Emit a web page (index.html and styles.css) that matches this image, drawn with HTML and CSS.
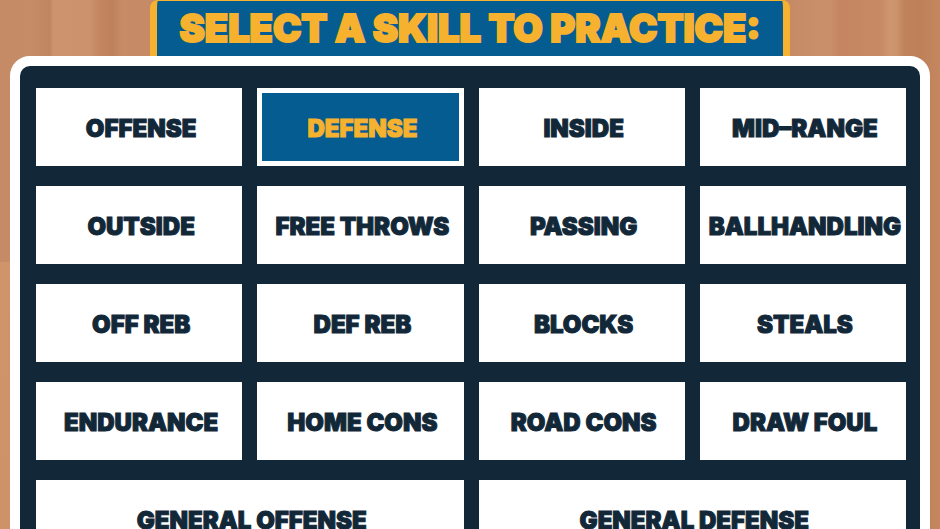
FILE: index.html
```html
<!DOCTYPE html>
<html lang="en">
<head>
  <meta charset="UTF-8" />
  <meta name="viewport" content="width=device-width, initial-scale=1.0" />
  <title>Practice</title>
  <link rel="stylesheet" href="styles.css">
</head>
<body>
  <h1 class="banner">SELECT A SKILL TO PRACTICE:</h1>

  <main class="panel">
    <div class="skills">
      <button type="button" class="skill">OFFENSE</button>
      <button type="button" class="skill selected" aria-pressed="true">DEFENSE</button>
      <button type="button" class="skill">INSIDE</button>
      <button type="button" class="skill">MID–RANGE</button>
      <button type="button" class="skill">OUTSIDE</button>
      <button type="button" class="skill">FREE THROWS</button>
      <button type="button" class="skill">PASSING</button>
      <button type="button" class="skill">BALLHANDLING</button>
      <button type="button" class="skill">OFF REB</button>
      <button type="button" class="skill">DEF REB</button>
      <button type="button" class="skill">BLOCKS</button>
      <button type="button" class="skill">STEALS</button>
      <button type="button" class="skill">ENDURANCE</button>
      <button type="button" class="skill">HOME CONS</button>
      <button type="button" class="skill">ROAD CONS</button>
      <button type="button" class="skill">DRAW FOUL</button>
      <button type="button" class="skill wide">GENERAL OFFENSE</button>
      <button type="button" class="skill wide">GENERAL DEFENSE</button>
    </div>
  </main>
</body>
</html>
```
FILE: styles.css
```css
* {
  margin: 0;
  padding: 0;
  box-sizing: border-box;
}
html {
  height: 100%;
  overflow: hidden;
}
body {
  min-height: 100%;
  padding: 0 10px;
  font-family: Inter, "Liberation Sans", sans-serif;
  /* wood floor: the first layer is the lighter plank at the lower left */
  background:
    linear-gradient(#cf9469, #cc9066) 0 262px / 10px 100% no-repeat,
    linear-gradient(90deg, #c58b67 0, #c68c67 30px, #c08662 50px, #cc946e 53px, #cb926c 90px, #c48762 98px, #bd805b 112px, #c78c66 122px, #c68b66 150px, #c68b66 790px, #c98f6b 830px, #c48560 840px, #c68a63 880px, #cf976f 890px, #cb926b 897px, #bf825a 905px, #bd8059 920px, #c4875f 940px);
}
.banner {
  width: fit-content;
  height: 56px;
  margin: 0 auto;
  padding: 0 23px;
  border: 7px solid #f6b22e;
  border-top-width: 1px;
  border-bottom: 0;
  border-radius: 8px 8px 0 0;
  background: #045c91;
  color: #f6b22e;
  font-size: 38px;
  font-weight: 900;
  line-height: 54px;
  white-space: nowrap;
  -webkit-text-stroke: 2px #f6b22e;
}
.panel {
  padding: 22px 14px 22px 16px;
  border: 10px solid #fff;
  border-radius: 20px;
  background: #122838;
}
.skills {
  display: grid;
  grid-template-columns: repeat(4, minmax(0, 1fr));
  gap: 20px 15px;
}
.skill {
  height: 78px;
  padding: 2px 0 0 4px;
  border: 5px solid #fff;
  background: #fff;
  color: #122838;
  font-family: inherit;
  font-size: 24px;
  font-weight: 900;
  white-space: nowrap;
  cursor: pointer;
  -webkit-text-stroke: 1px currentColor;
}
.skill.selected {
  background: #045c91;
  color: #f6b22e;
}
.skill.wide {
  grid-column: span 2;
}
```
